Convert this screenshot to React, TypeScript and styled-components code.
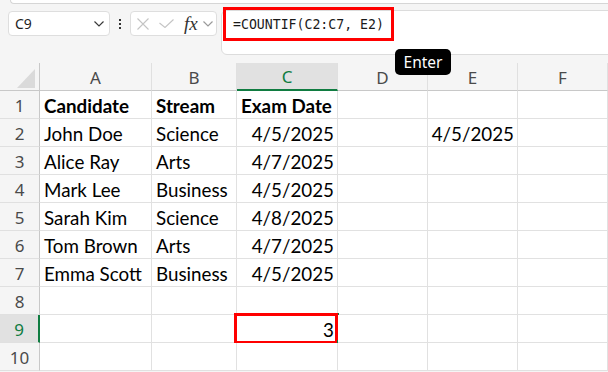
import React from 'react';
import styled, { createGlobalStyle, css } from 'styled-components';

const GREEN = '#107c41';

const GlobalStyle = createGlobalStyle`
  body {
    margin: 0;
    background: #f5f5f5;
  }
`;

type Align = 'left' | 'right';
type CellData = { text?: string; align?: Align; bold?: boolean; selected?: boolean };

const columns = ['A', 'B', 'C', 'D', 'E', 'F'];

const rows: CellData[][] = [
  [{ text: 'Candidate', bold: true }, { text: 'Stream', bold: true }, { text: 'Exam Date', bold: true }, {}, {}, {}],
  [{ text: 'John Doe' }, { text: 'Science' }, { text: '4/5/2025', align: 'right' }, {}, { text: '4/5/2025', align: 'right' }, {}],
  [{ text: 'Alice Ray' }, { text: 'Arts' }, { text: '4/7/2025', align: 'right' }, {}, {}, {}],
  [{ text: 'Mark Lee' }, { text: 'Business' }, { text: '4/5/2025', align: 'right' }, {}, {}, {}],
  [{ text: 'Sarah Kim' }, { text: 'Science' }, { text: '4/8/2025', align: 'right' }, {}, {}, {}],
  [{ text: 'Tom Brown' }, { text: 'Arts' }, { text: '4/7/2025', align: 'right' }, {}, {}, {}],
  [{ text: 'Emma Scott' }, { text: 'Business' }, { text: '4/5/2025', align: 'right' }, {}, {}, {}],
  [{}, {}, {}, {}, {}, {}],
  [{}, {}, { text: '3', align: 'right', selected: true }, {}, {}, {}],
  [{}, {}, {}, {}, {}, {}]
];

const Chevron = ({ color }: { color: string }) => (
  <svg width="10" height="6" viewBox="0 0 10 6">
    <path d="M0.5 0.5 L5 5 L9.5 0.5" fill="none" stroke={color} strokeWidth="1.2" />
  </svg>
);

const App = () => {
  return (
    <>
      <GlobalStyle />
      <S.Window>
        <S.RibbonEdge />

        <S.FormulaRow>
          <S.NameBox>
            <S.NameText>C9</S.NameText>
            <Chevron color="#3a3a3a" />
          </S.NameBox>

          <S.Dots>
            <span />
            <span />
            <span />
          </S.Dots>

          <S.FxBox>
            <svg width="12" height="12" viewBox="0 0 12 12">
              <path d="M0.5 0.5 L11.5 11.5 M11.5 0.5 L0.5 11.5" stroke="#c4c4c4" strokeWidth="1.1" />
            </svg>
            <S.CheckIcon width="15" height="9" viewBox="0 0 15 9">
              <path d="M0.5 4 L6 8.5 L14.5 0.5" fill="none" stroke="#c4c4c4" strokeWidth="1.1" />
            </S.CheckIcon>
            <S.Fx>fx</S.Fx>
            <S.FxChevron>
              <Chevron color="#9a9a9a" />
            </S.FxChevron>
          </S.FxBox>

          <S.FormulaBar>
            <S.Highlight>=COUNTIF(C2:C7, E2)</S.Highlight>
          </S.FormulaBar>
        </S.FormulaRow>

        <S.Sheet>
          <S.Corner>
            <S.CornerMark />
          </S.Corner>
          {columns.map((c) => (
            <S.ColHeader key={c} $active={c === 'C'}>
              {c}
            </S.ColHeader>
          ))}

          {rows.map((row, r) => (
            <React.Fragment key={r}>
              <S.RowHeader $active={r === 8}>{r + 1}</S.RowHeader>
              {row.map((cell, c) => (
                <S.Cell key={c} $align={cell.align || 'left'} $bold={!!cell.bold}>
                  {cell.text}
                  {cell.selected && (
                    <>
                      <S.SelectEdge />
                      <S.RedBox />
                      <S.FillHandle />
                    </>
                  )}
                </S.Cell>
              ))}
            </React.Fragment>
          ))}
        </S.Sheet>

        <S.Tooltip>Enter</S.Tooltip>
      </S.Window>
    </>
  );
};

export default App;

const headerFont = css`
  font-family: 'Noto Sans', 'Open Sans', sans-serif;
  font-size: 17px;
  color: #4a4a4a;
`;

const S = {
  Window: styled.div`
    position: relative;
    width: 608px;
    height: 372px;
    overflow: hidden;
    background: #f5f5f5;
  `,
  RibbonEdge: styled.div`
    height: 3px;
    margin-left: 10px;
    background: #fff;
    border-left: 1px solid #d6d6d6;
    border-bottom: 1px solid #d6d6d6;
    border-bottom-left-radius: 6px;
  `,
  FormulaRow: styled.div`
    display: flex;
    align-items: flex-start;
    margin-top: 6px;
    padding-left: 8px;
    height: 45px;
  `,
  NameBox: styled.div`
    box-sizing: border-box;
    display: flex;
    align-items: center;
    justify-content: space-between;
    width: 102px;
    height: 25px;
    margin-top: 1px;
    padding: 0 5px 0 6px;
    background: #fff;
    border: 1px solid #dedede;
    border-radius: 4px;
  `,
  NameText: styled.span`
    font-family: 'Noto Sans', 'Open Sans', sans-serif;
    font-size: 14px;
    color: #1e1e1e;
  `,
  Dots: styled.div`
    display: flex;
    flex-direction: column;
    gap: 2px;
    margin: 9px 9px 0 9px;

    span {
      width: 2px;
      height: 2px;
      background: #333;
    }
  `,
  FxBox: styled.div`
    box-sizing: border-box;
    display: flex;
    align-items: center;
    width: 87px;
    height: 25px;
    margin-top: 1px;
    padding-left: 6px;
    background: #fff;
    border: 1px solid #dedede;
    border-radius: 4px;
  `,
  CheckIcon: styled.svg`
    margin-left: 10px;
  `,
  Fx: styled.span`
    margin-left: 10px;
    font-family: 'Liberation Serif', serif;
    font-style: italic;
    font-size: 19px;
    line-height: 20px;
    color: #333;
  `,
  FxChevron: styled.span`
    display: flex;
    margin-left: 5px;
  `,
  FormulaBar: styled.div`
    box-sizing: border-box;
    flex: 1;
    height: 45px;
    margin-left: 4px;
    margin-right: -10px;
    background: #fff;
    border: 1px solid #dcdcdc;
    border-radius: 6px 0 0 6px;
  `,
  Highlight: styled.div`
    box-sizing: border-box;
    display: flex;
    align-items: center;
    width: 171px;
    height: 34px;
    margin: -4px 0 0 1px;
    padding-left: 7px;
    border: 3px solid #ff0000;
    font-family: 'DejaVu Sans Mono', monospace;
    font-size: 13.2px;
    color: #1a1a1a;
    white-space: nowrap;
  `,
  Sheet: styled.div`
    display: grid;
    grid-template-columns: 40px 112px 85px 101px 90px 90px 90px;
    grid-auto-rows: 28px;
    margin-top: 8px;
  `,
  Corner: styled.div`
    box-sizing: border-box;
    display: flex;
    align-items: flex-end;
    justify-content: flex-end;
    padding: 0 4px 2px 0;
    border-right: 1px solid #c8c8c8;
    border-bottom: 1px solid #c8c8c8;
  `,
  CornerMark: styled.div`
    width: 0;
    height: 0;
    border-left: 18px solid transparent;
    border-bottom: 19px solid #dadada;
  `,
  ColHeader: styled.div<{ $active: boolean }>`
    box-sizing: border-box;
    display: flex;
    align-items: center;
    justify-content: center;
    padding-top: 1px;
    border-right: 1px solid #e0e0e0;
    border-bottom: 1px solid #c8c8c8;
    ${headerFont};
    ${(p) =>
      p.$active &&
      css`
        background: #e1e1e1;
        color: ${GREEN};
        border-bottom: 2px solid ${GREEN};
      `}
  `,
  RowHeader: styled.div<{ $active: boolean }>`
    box-sizing: border-box;
    display: flex;
    align-items: center;
    justify-content: center;
    padding-top: 2px;
    border-right: 1px solid #c8c8c8;
    border-bottom: 1px solid #e0e0e0;
    ${headerFont};
    ${(p) =>
      p.$active &&
      css`
        background: #e1e1e1;
        color: ${GREEN};
        border-right: 2px solid ${GREEN};
      `}
  `,
  Cell: styled.div<{ $align: Align; $bold: boolean }>`
    position: relative;
    box-sizing: border-box;
    display: flex;
    align-items: flex-end;
    justify-content: ${(p) => (p.$align === 'right' ? 'flex-end' : 'flex-start')};
    padding: 0 3px 1px 4px;
    background: #fff;
    border-right: 1px solid #e1e1e1;
    border-bottom: 1px solid #e1e1e1;
    font-family: Lato, 'Liberation Sans', sans-serif;
    font-size: 18.8px;
    font-weight: ${(p) => (p.$bold ? 700 : 400)};
    line-height: 22px;
    color: #000;
    white-space: nowrap;
  `,
  SelectEdge: styled.span`
    position: absolute;
    left: 100px;
    top: -2px;
    width: 2px;
    height: 30px;
    background: ${GREEN};
  `,
  RedBox: styled.span`
    position: absolute;
    left: -3px;
    top: -2px;
    box-sizing: border-box;
    width: 104px;
    height: 31px;
    border: 3px solid #ff0000;
  `,
  FillHandle: styled.span`
    position: absolute;
    left: 100px;
    top: 25px;
    width: 3px;
    height: 4px;
    background: ${GREEN};
  `,
  Tooltip: styled.div`
    position: absolute;
    left: 395px;
    top: 49px;
    box-sizing: border-box;
    width: 56px;
    height: 26px;
    display: flex;
    align-items: center;
    justify-content: center;
    background: #000;
    border-radius: 5px;
    font-family: 'Noto Sans', 'Open Sans', sans-serif;
    font-size: 15.5px;
    color: #fff;
  `
};
